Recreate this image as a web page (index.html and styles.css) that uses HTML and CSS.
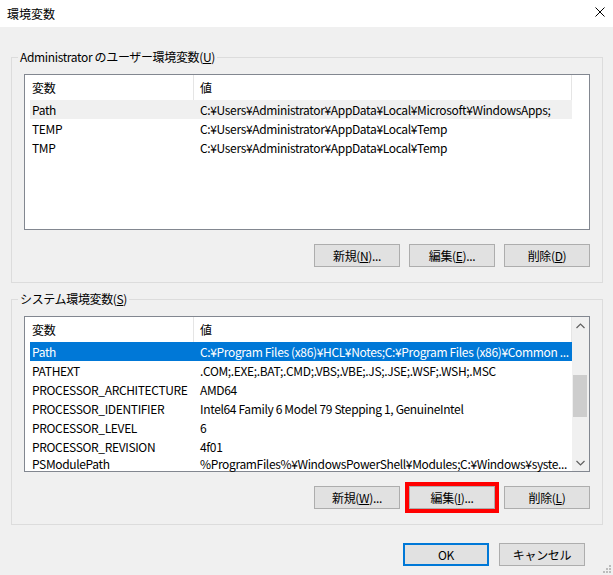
FILE: index.html
```html
<!DOCTYPE html>
<html lang="ja">
<head>
    <meta charset="UTF-8">
    <title>環境変数</title>
    <link rel="stylesheet" href="styles.css">
</head>
<body>
    <div class="titlebar">
        <span class="title">環境変数</span>
        <svg class="close" width="10" height="10" viewBox="0 0 10 10">
            <path d="M0.5 0.5L9.5 9.5M9.5 0.5L0.5 9.5" stroke="#000" stroke-width="1"/>
        </svg>
    </div>

    <div class="content">
        <fieldset class="group">
            <legend>Administrator のユーザー環境変数(<u>U</u>)</legend>
            <div class="list">
                <div class="list-main">
                    <div class="list-head">
                        <div class="head-name">変数</div>
                        <div class="head-value">値</div>
                    </div>
                    <div class="row row-inactive"><span>Path</span><span>C:¥Users¥Administrator¥AppData¥Local¥Microsoft¥WindowsApps;</span></div>
                    <div class="row"><span>TEMP</span><span>C:¥Users¥Administrator¥AppData¥Local¥Temp</span></div>
                    <div class="row"><span>TMP</span><span>C:¥Users¥Administrator¥AppData¥Local¥Temp</span></div>
                </div>
            </div>
            <div class="actions">
                <button class="btn">新規(<u>N</u>)...</button>
                <button class="btn">編集(<u>E</u>)...</button>
                <button class="btn">削除(<u>D</u>)</button>
            </div>
        </fieldset>

        <fieldset class="group">
            <legend>システム環境変数(<u>S</u>)</legend>
            <div class="list">
                <div class="list-main">
                    <div class="list-head">
                        <div class="head-name">変数</div>
                        <div class="head-value">値</div>
                    </div>
                    <div class="row row-selected"><span>Path</span><span>C:¥Program Files (x86)¥HCL¥Notes;C:¥Program Files (x86)¥Common ...</span></div>
                    <div class="row"><span>PATHEXT</span><span>.COM;.EXE;.BAT;.CMD;.VBS;.VBE;.JS;.JSE;.WSF;.WSH;.MSC</span></div>
                    <div class="row"><span>PROCESSOR_ARCHITECTURE</span><span>AMD64</span></div>
                    <div class="row"><span>PROCESSOR_IDENTIFIER</span><span>Intel64 Family 6 Model 79 Stepping 1, GenuineIntel</span></div>
                    <div class="row"><span>PROCESSOR_LEVEL</span><span>6</span></div>
                    <div class="row"><span>PROCESSOR_REVISION</span><span>4f01</span></div>
                    <div class="row row-last"><span>PSModulePath</span><span>%ProgramFiles%¥WindowsPowerShell¥Modules;C:¥Windows¥syste...</span></div>
                </div>
                <div class="scrollbar">
                    <div class="scroll-btn">
                        <svg width="9" height="6" viewBox="0 0 9 6"><polyline points="0.5,5 4.5,1 8.5,5" fill="none" stroke="#606060" stroke-width="1.2"/></svg>
                    </div>
                    <div class="scroll-track">
                        <div class="scroll-thumb"></div>
                    </div>
                    <div class="scroll-btn">
                        <svg width="9" height="6" viewBox="0 0 9 6"><polyline points="0.5,1 4.5,5 8.5,1" fill="none" stroke="#606060" stroke-width="1.2"/></svg>
                    </div>
                </div>
            </div>
            <div class="actions">
                <button class="btn">新規(<u>W</u>)...</button>
                <button class="btn btn-marked">編集(<u>I</u>)...</button>
                <button class="btn">削除(<u>L</u>)</button>
            </div>
        </fieldset>
    </div>

    <div class="footer">
        <button class="btn btn-default">OK</button>
        <button class="btn">キャンセル</button>
    </div>

    <svg class="grip" width="10" height="10" viewBox="0 0 10 10">
        <rect x="7" y="1" width="2" height="2" fill="#bcbcbc"/>
        <rect x="4" y="4" width="2" height="2" fill="#bcbcbc"/>
        <rect x="7" y="4" width="2" height="2" fill="#bcbcbc"/>
        <rect x="1" y="7" width="2" height="2" fill="#bcbcbc"/>
        <rect x="4" y="7" width="2" height="2" fill="#bcbcbc"/>
        <rect x="7" y="7" width="2" height="2" fill="#bcbcbc"/>
    </svg>
</body>
</html>
```

FILE: styles.css
```css
:root {
    --bg-color: #f0f0f0;
    --text-color: #000;
    --group-border: #dcdcdc;
    --list-border: #828790;
    --select-color: #0078d7;
    --button-bg: #e1e1e1;
    --button-border: #adadad;
}

body {
    font-family: "Noto Sans CJK JP", "Noto Sans", sans-serif;
    font-size: 12px;
    letter-spacing: -0.35px;
    color: var(--text-color);
    background-color: var(--bg-color);
    width: 613px;
    height: 575px;
    margin: 0;
    overflow: hidden;
    position: relative;
}

.titlebar {
    height: 27px;
    background-color: #fff;
    display: flex;
    align-items: center;
    justify-content: space-between;
    padding: 0 8px 0 7px;
    box-sizing: border-box;
}

.title {
    line-height: 16px;
    letter-spacing: 0;
}

.close {
    display: block;
    margin-bottom: 3px;
}

.content {
    padding: 22px 10px 0 11px;
}

.group {
    margin: 0;
    min-width: 0;
    border: 1px solid var(--group-border);
    padding: 9px 12px 15px;
}

.group + .group {
    margin-top: 8px;
}

.group legend {
    line-height: 16px;
    padding: 0 2px;
    margin-left: -6px;
}

.list {
    height: 156px;
    box-sizing: border-box;
    border: 1px solid var(--list-border);
    background-color: #fff;
    display: flex;
}

.list-main {
    flex: 1;
    min-width: 0;
}

.list-head {
    display: flex;
    height: 25px;
    line-height: 25px;
}

.head-name,
.head-value {
    box-sizing: border-box;
    border-right: 1px solid #e5e5e5;
    flex-shrink: 0;
}

.head-name {
    width: 169px;
    padding-left: 7px;
}

.head-value {
    width: 378px;
    padding-left: 6px;
}

.row {
    display: grid;
    grid-template-columns: 168px 1fr;
    width: 542px;
    height: 19px;
    line-height: 19px;
    margin-left: 5px;
    padding-left: 2px;
    box-sizing: border-box;
    white-space: nowrap;
}

.row-last {
    height: 16px;
    line-height: 16px;
}

.row-inactive {
    background-color: #f0f0f0;
}

.row-selected {
    background-color: var(--select-color);
    color: #fff;
}

.scrollbar {
    width: 17px;
    flex-shrink: 0;
    background-color: var(--bg-color);
    display: flex;
    flex-direction: column;
}

.scroll-btn {
    height: 17px;
    display: flex;
    align-items: center;
    justify-content: center;
}

.scroll-btn svg {
    display: block;
}

.scroll-track {
    flex: 1;
}

.scroll-thumb {
    height: 42px;
    margin: 41px 2px 0 1px;
    background-color: #cdcdcd;
}

.actions {
    display: flex;
    justify-content: flex-end;
    gap: 9px;
    margin-top: 14px;
}

.btn {
    width: 86px;
    height: 23px;
    box-sizing: border-box;
    padding: 0;
    font-family: inherit;
    font-size: 12px;
    letter-spacing: -0.35px;
    color: var(--text-color);
    background-color: var(--button-bg);
    border: 1px solid var(--button-border);
}

.btn-default {
    border: 2px solid var(--select-color);
}

.btn-marked {
    outline: 4px solid #ff0000;
}

.footer {
    display: flex;
    justify-content: flex-end;
    gap: 10px;
    padding: 18px 28px 0 0;
}

.grip {
    position: absolute;
    right: 1px;
    bottom: 1px;
}
```
